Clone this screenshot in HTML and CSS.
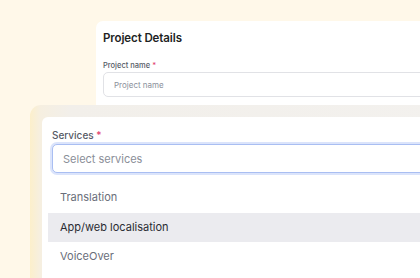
FILE: index.html
```html
<!DOCTYPE html>
<html lang="en">
<head>
    <meta charset="UTF-8">
    <meta name="viewport" content="width=device-width, initial-scale=1.0">
    <title>Project Details</title>
    <link rel="stylesheet" href="styles.css">
</head>
<body>
    <div class="scene">
        <div class="card-back">
            <h1 class="card-title">Project Details</h1>
            <label class="field-label small">Project name <span class="req">*</span></label>
            <div class="input small-input">Project name</div>
        </div>

        <div class="frame">
            <div class="card-front">
                <label class="field-label">Services <span class="req">*</span></label>
                <div class="input focus-input">Select services</div>
                <ul class="options">
                    <li class="option">Translation</li>
                    <li class="option active">App/web localisation</li>
                    <li class="option">VoiceOver</li>
                </ul>
            </div>
        </div>
    </div>
</body>
</html>
```

FILE: styles.css
```css
html, body {
    margin: 0;
    padding: 0;
}

body {
    width: 420px;
    height: 278px;
    overflow: hidden;
    background: #fff8e9;
    font-family: "Inter", "Liberation Sans", sans-serif;
}

.scene {
    position: relative;
    width: 420px;
    height: 278px;
    overflow: hidden;
}

/* Carta de atras */
.card-back {
    margin: 21px 0 0 96px;
    width: 340px;
    height: 120px;
    background: #fff;
    border-radius: 7px 0 0 0;
    padding: 10px 7px;
    box-sizing: border-box;
}

.card-title {
    margin: 0 0 16px 0;
    font-size: 11.5px;
    font-weight: 600;
    color: #1e1f24;
    letter-spacing: -0.1px;
}

.field-label {
    display: block;
    font-size: 10px;
    font-weight: 500;
    color: #555a66;
    margin-bottom: 4px;
}

.field-label.small {
    font-size: 7.5px;
    margin-bottom: 2px;
}

.req {
    color: #e2426e;
}

.input {
    box-sizing: border-box;
    background: #fff;
    color: #8b909b;
    display: flex;
    align-items: center;
}

.small-input {
    height: 25px;
    border: 1px solid #e1e2e6;
    border-radius: 5px;
    padding-left: 10px;
    font-size: 8px;
    width: 330px;
}

/* Carta de adelante */
.frame {
    position: absolute;
    left: 30px;
    top: 105px;
    width: 420px;
    height: 200px;
    padding: 12px 0 0 12px;
    box-sizing: border-box;
    border-radius: 11px 0 0 0;
    background: linear-gradient(to right, #fcefcb 0px, #f6efe0 10px, #f2efea 40px, #f3f1ee 100%);
}

.card-front {
    background: #fff;
    border-radius: 6px 0 0 0;
    height: 100%;
    padding: 12px 0 0 8px;
    box-sizing: border-box;
}

.card-front .field-label {
    padding-left: 2px;
    margin-bottom: 3px;
}

.focus-input {
    height: 29px;
    margin-left: 2px;
    border: 1px solid #a9bef2;
    box-shadow: 0 0 0 2px #dbe4fb;
    border-radius: 5px;
    padding-left: 10px;
    font-size: 11px;
    color: #8a8e98;
}

.options {
    list-style: none;
    margin: 10px 0 0 -2px;
    padding: 0;
}

.option {
    height: 29.5px;
    line-height: 29.5px;
    padding-left: 12px;
    font-size: 11px;
    color: #6a6e7a;
}

.option.active {
    background: #ebebef;
    color: #2a2c33;
}
```
